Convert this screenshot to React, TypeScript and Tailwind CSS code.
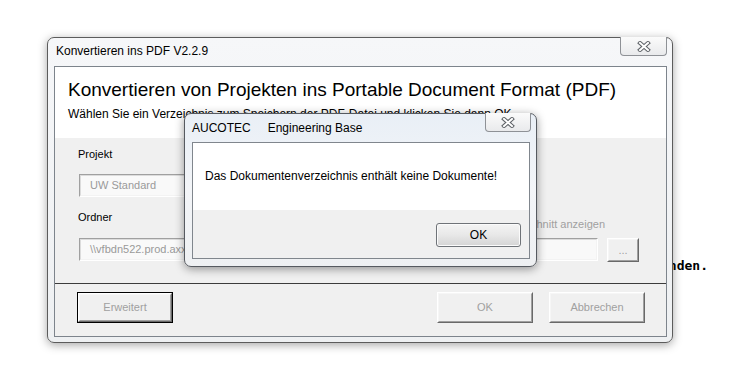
import React from 'react';

const CloseGlyph: React.FC = () => (
  <svg width="14" height="11" viewBox="0 0 14 11">
    <path d="M3 2 L11 9 M11 2 L3 9" stroke="#5f6368" strokeWidth="4" strokeLinecap="square" />
    <path d="M3 2 L11 9 M11 2 L3 9" stroke="#ffffff" strokeWidth="2" strokeLinecap="square" />
  </svg>
);

const ClassicButton: React.FC<{ label: string; className?: string }> = ({ label, className }) => (
  <div className={`border border-t-white border-l-white border-r-[#696969] border-b-[#696969] ${className ?? ''}`}>
    <div className="flex h-full w-full items-center justify-center border border-t-[#f6f6f6] border-l-[#f6f6f6] border-r-[#a0a0a0] border-b-[#a0a0a0] bg-[#f0f0f0] text-[11px] text-[#a0a0a0]">
      {label}
    </div>
  </div>
);

const SunkenField: React.FC<{ text: string; className?: string }> = ({ text, className }) => (
  <div className={`border border-t-[#a0a0a0] border-l-[#a0a0a0] border-r-white border-b-white ${className ?? ''}`}>
    <div className="h-full w-full overflow-hidden whitespace-nowrap border border-t-[#dcdcdc] border-l-[#dcdcdc] border-r-[#f3f3f3] border-b-[#f3f3f3] bg-[#f9f9f9] pl-[9px] pt-[3px] text-[11px] leading-[13px] text-[#9a9a9a]">
      {text}
    </div>
  </div>
);

const MainWindow: React.FC = () => (
  <div className="absolute left-[47px] top-[37px] flex h-[306px] w-[626px] flex-col rounded-[7px] border border-[#5c5c5c] bg-gradient-to-b from-[#f6f7f9] to-[#eef0f2] pb-[5px] pl-[6px] pr-[5px] shadow-[0_2px_10px_rgba(0,0,0,0.35)]">
    <div className="h-[28px] pl-[2px] pt-[6px] text-[12px] leading-[14px] text-black">Konvertieren ins PDF V2.2.9</div>
    <div className="absolute right-[5px] top-[-1px] flex h-[19px] w-[47px] items-center justify-center rounded-b-[4px] border border-t-0 border-[#8e9196] bg-gradient-to-b from-[#fbfbfb] to-[#e9eaec]">
      <CloseGlyph />
    </div>

    <div className="flex flex-1 flex-col border border-[#7d848c]">
      <div className="h-[71px] bg-white pl-[13px] pt-[11px]">
        <div className="text-[19px] leading-[23px] text-black">Konvertieren von Projekten ins Portable Document Format (PDF)</div>
        <div className="mt-[6px] text-[12px] leading-[14px] text-black">
          Wählen Sie ein Verzeichnis zum Speichern der PDF-Datei und klicken Sie dann OK.
        </div>
      </div>

      <div className="flex h-[145px] flex-col bg-[#f0f0f0] pl-[23px] pr-[27px] pt-[10px]">
        <div className="text-[11px] leading-[13px] text-black">Projekt</div>
        <SunkenField text="UW Standard" className="ml-[1px] mt-[13px] h-[23px] w-[390px]" />
        <div className="mt-[14px] flex items-start justify-between">
          <span className="text-[11px] leading-[13px] text-black">Ordner</span>
          <span className="mr-[34px] pt-[7px] text-[11px] leading-[13px] text-[#a0a0a0]">Ausschnitt anzeigen</span>
        </div>
        <div className="ml-[1px] mt-[7px] flex items-start gap-[9px]">
          <SunkenField text="\\vfbdn522.prod.axxess.de\EB" className="h-[23px] flex-1" />
          <ClassicButton label="..." className="h-[24px] w-[32px]" />
        </div>
      </div>

      <div className="h-px bg-[#3c3c3c]" />

      <div className="flex flex-1 items-start bg-[#f0f0f0] pl-[22px] pr-[21px] pt-[8px]">
        <div className="border border-black">
          <ClassicButton label="Erweitert" className="h-[29px] w-[94px]" />
        </div>
        <ClassicButton label="OK" className="ml-auto h-[31px] w-[96px]" />
        <ClassicButton label="Abbrechen" className="ml-[16px] h-[31px] w-[96px]" />
      </div>
    </div>
  </div>
);

const MessageBox: React.FC = () => (
  <div className="absolute left-[184px] top-[113px] flex h-[154px] w-[353px] flex-col rounded-[7px] border border-[#565a60] bg-gradient-to-b from-[#e9eff6] via-[#f3f5f8] to-[#eef0f2] pb-[7px] pl-[7px] pr-[6px] shadow-[0_2px_10px_rgba(0,0,0,0.4)]">
    <div className="flex h-[28px] gap-[17px] pt-[7px] text-[12px] leading-[14px] text-black">
      <span>AUCOTEC</span>
      <span>Engineering Base</span>
    </div>
    <div className="absolute right-[5px] top-[-1px] flex h-[19px] w-[46px] items-center justify-center rounded-b-[4px] border border-t-0 border-[#8e9196] bg-gradient-to-b from-[#fbfbfb] to-[#e9eaec]">
      <CloseGlyph />
    </div>

    <div className="flex flex-1 flex-col border border-[#80868d]">
      <div className="h-[67px] bg-white pl-[12px] pt-[26px] text-[12px] leading-[14px] text-black">
        Das Dokumentenverzeichnis enthält keine Dokumente!
      </div>
      <div className="flex flex-1 items-start justify-end bg-[#f0f0f0] pr-[8px] pt-[13px]">
        <div className="flex h-[24px] w-[85px] items-center justify-center rounded-[3px] border border-[#6f7378] bg-gradient-to-b from-[#f4f4f4] via-[#e8e8e8] to-[#d4d4d4] text-[12px] text-black shadow-[inset_0_0_0_1px_#fbfbfb]">
          OK
        </div>
      </div>
    </div>
  </div>
);

export default function App() {
  return (
    <div className="relative h-[386px] w-[747px] overflow-hidden bg-white font-['Liberation_Sans',Arial,sans-serif]">
      <div className="absolute right-[39px] top-[258px] font-['DejaVu_Sans_Mono',monospace] text-[13px] font-bold leading-[15px] text-black">
        gefunden.
      </div>
      <MainWindow />
      <MessageBox />
    </div>
  );
}
